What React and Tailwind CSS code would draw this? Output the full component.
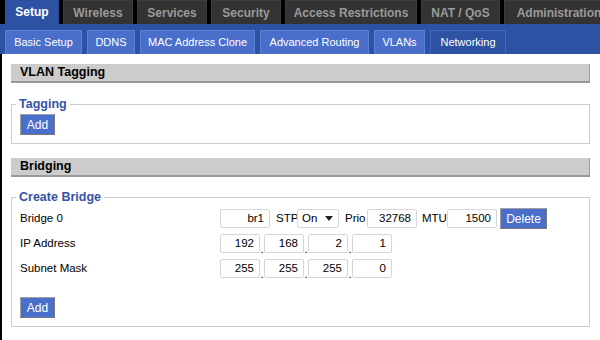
import React from 'react';

const tabs = [
  { name: 'Setup', w: 'w-[54px]', active: true },
  { name: 'Wireless', w: 'w-[70px]' },
  { name: 'Services', w: 'w-[70px]' },
  { name: 'Security', w: 'w-[70px]' },
  { name: 'Access Restrictions', w: 'w-[132px]' },
  { name: 'NAT / QoS', w: 'w-[79px]' },
  { name: 'Administration', w: 'w-[110px]' },
];

const subTabs = [
  { name: 'Basic Setup', w: 'w-[77px]' },
  { name: 'DDNS', w: 'w-[48px]' },
  { name: 'MAC Address Clone', w: 'w-[115px]' },
  { name: 'Advanced Routing', w: 'w-[109px]' },
  { name: 'VLANs', w: 'w-[51px]' },
  { name: 'Networking', w: 'w-[76px]', active: true },
];

function SectionHeader({ title }) {
  return (
    <div className="h-[19px] bg-[#cccccc] border-b-2 border-r border-[#999999] pl-[9px] flex items-center text-[12.5px] font-bold text-black">
      {title}
    </div>
  );
}

function Button({ children, w }) {
  return (
    <div className={`${w} h-[21px] bg-[#4a6fcb] border border-t-[#a0a0a0] border-l-[#a0a0a0] border-r-[#777777] border-b-[#777777] text-white text-[12px] flex items-center justify-center`}>
      {children}
    </div>
  );
}

function Field({ value, w }) {
  return (
    <div className={`${w} h-[19px] border border-[#d6d6d6] rounded-[2px] bg-white text-[11.5px] text-black flex items-center justify-end pr-[5px]`}>
      {value}
    </div>
  );
}

function Dot() {
  return <span className="w-[4px] text-[11px] self-end leading-[14px] text-center">.</span>;
}

function IpRow({ label, parts }) {
  return (
    <div className="h-[25px] flex items-center">
      <span className="w-[200px]">{label}</span>
      {parts.map((p, i) => (
        <React.Fragment key={i}>
          <Field value={p} w="w-[40px]" />
          {i < parts.length - 1 && <Dot />}
        </React.Fragment>
      ))}
    </div>
  );
}

export default function App() {
  return (
    <div className="w-[600px] h-[340px] overflow-hidden bg-black font-['Liberation_Sans',Arial,sans-serif]">
      {/* main tabs */}
      <div className="h-[24px] flex pl-[5px] gap-[4px]">
        {tabs.map(t => (
          <div
            key={t.name}
            className={`${t.w} shrink-0 flex items-center justify-center text-[12px] font-bold ${t.active ? 'h-[24px] bg-[#2e52a3] text-white' : 'h-[24px] bg-[#333333] border border-[#3d3d3d] border-b-0 text-[#9a9a9a]'}`}
          >
            {t.name}
          </div>
        ))}
      </div>

      {/* sub tabs */}
      <div className="h-[30px] bg-[#2e52a3] flex items-end pl-[5px] gap-[5px]">
        {subTabs.map(t => (
          <div
            key={t.name}
            className={`${t.w} shrink-0 h-[24px] flex items-center justify-center text-[11px] text-white border border-b-0 ${t.active ? 'bg-[#2e52a3] border-[#4466c2]' : 'bg-[#4a6fcb] border-[#5b80d8]'}`}
          >
            {t.name}
          </div>
        ))}
      </div>

      {/* content */}
      <div className="ml-[2px] h-[286px] bg-white pl-[9px] pr-[10px] pt-[10px] text-[11.5px] text-black">
        <SectionHeader title="VLAN Tagging" />
        <fieldset className="mt-[14px] border border-[#cccccc] px-[8px] pb-[8px]">
          <legend className="-ml-[4px] px-[3px] text-[12.5px] font-bold text-[#3553a6] leading-[14px]">Tagging</legend>
          <div className="pt-[3px]">
            <Button w="w-[35px]">Add</Button>
          </div>
        </fieldset>

        <div className="mt-[14px]">
          <SectionHeader title="Bridging" />
        </div>
        <fieldset className="mt-[13px] border border-[#cccccc] px-[8px] pb-[8px]">
          <legend className="-ml-[4px] px-[3px] text-[12.5px] font-bold text-[#3553a6] leading-[14px]">Create Bridge</legend>
          <div className="pt-[2px]">
            <div className="h-[25px] flex items-center">
              <span className="w-[200px]">Bridge 0</span>
              <Field value="br1" w="w-[50px]" />
              <span className="ml-[6px] w-[21px]">STP</span>
              <div className="w-[42px] h-[19px] border border-[#d6d6d6] rounded-[2px] flex items-center justify-between pl-[4px] pr-[5px]">
                <span>On</span>
                <svg width="8" height="5" viewBox="0 0 8 5"><path d="M0 0h8L4 5z" fill="#222" /></svg>
              </div>
              <span className="ml-[6px] w-[22px]">Prio</span>
              <Field value="32768" w="w-[50px]" />
              <span className="ml-[5px] w-[25px]">MTU</span>
              <Field value="1500" w="w-[50px]" />
              <div className="ml-[3px]">
                <Button w="w-[47px]">Delete</Button>
              </div>
            </div>
            <IpRow label="IP Address" parts={['192', '168', '2', '1']} />
            <IpRow label="Subnet Mask" parts={['255', '255', '255', '0']} />
          </div>
          <div className="mt-[16px]">
            <Button w="w-[35px]">Add</Button>
          </div>
        </fieldset>
      </div>
    </div>
  );
}
